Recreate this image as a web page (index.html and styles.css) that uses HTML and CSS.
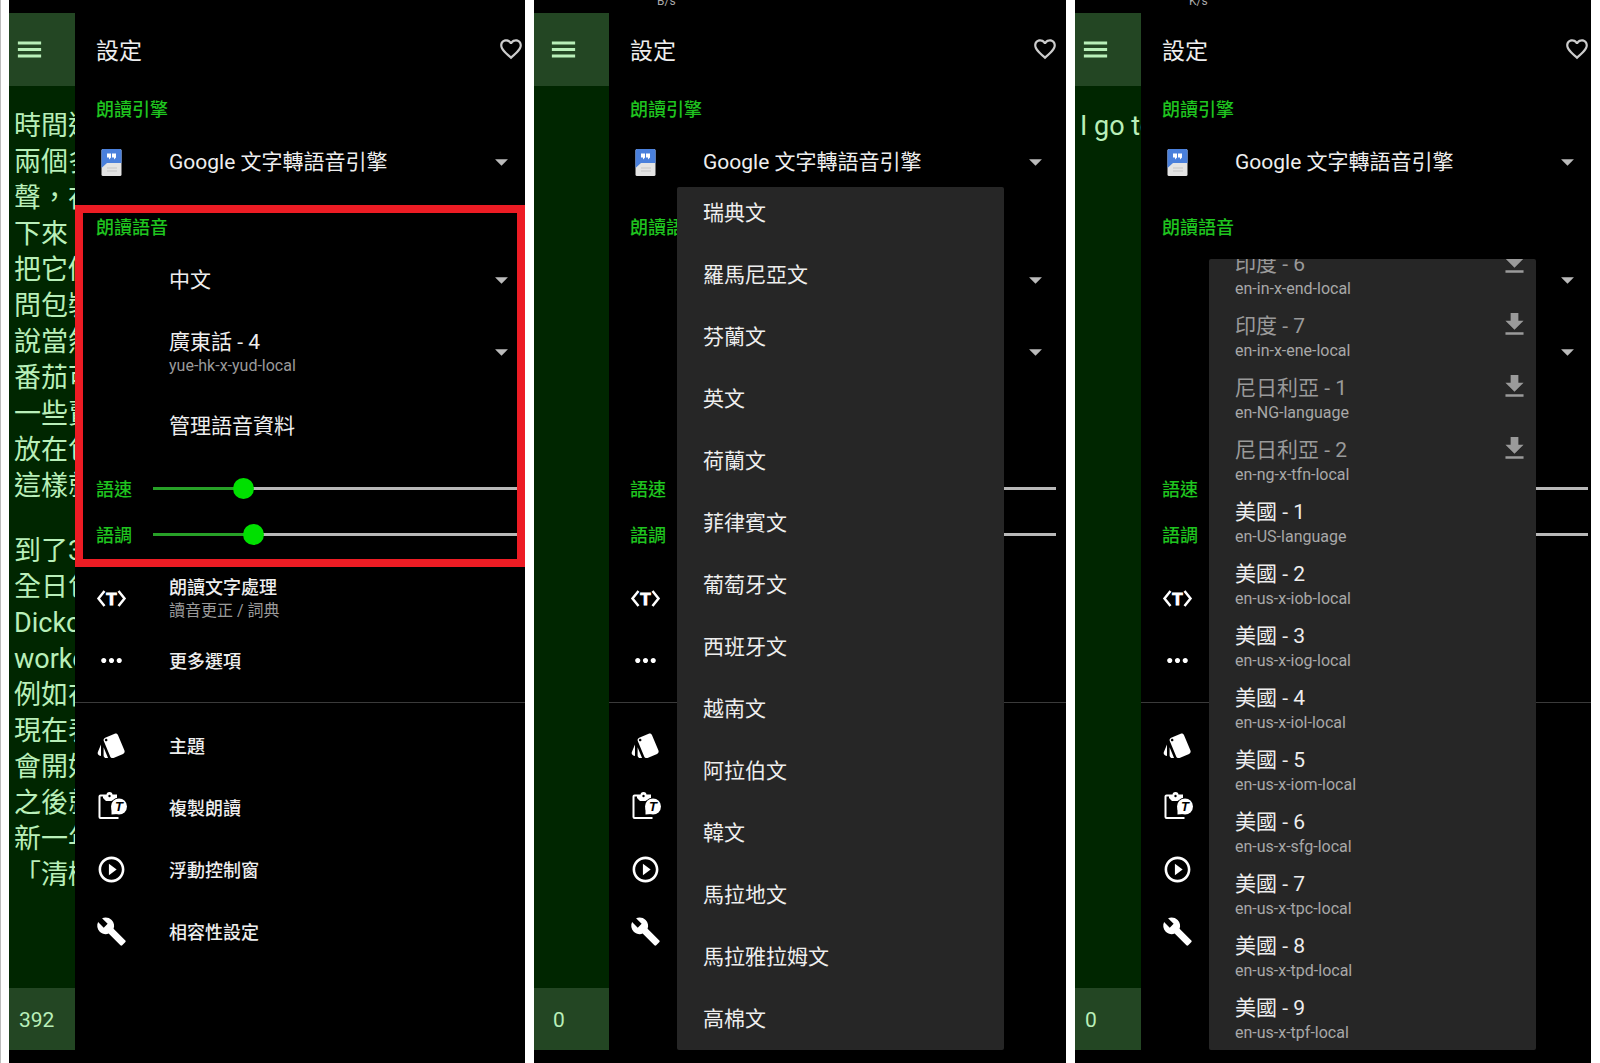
FILE: index.html
```html
<!DOCTYPE html>
<html lang="zh-Hant">
<head>
    <meta charset="UTF-8">
    <meta name="viewport" content="width=device-width, initial-scale=1.0">
    <title>設定</title>
    <link rel="stylesheet" href="styles.css">
</head>
<body>
    <!-- Icons shared by the three screens -->
    <svg class="sprite" aria-hidden="true">
        <symbol id="i-menu" viewBox="0 0 24 24"><path d="M3 18.200h18v-2.400H3v2.400zm0-5h18v-2.400H3v2.400zm0-7.400v2.400h18V5.800H3z"/></symbol>
        <symbol id="i-heart" viewBox="0 0 24 24"><path d="M16.5 3c-1.74 0-3.41.81-4.5 2.09C10.91 3.81 9.24 3 7.5 3 4.42 3 2 5.42 2 8.5c0 3.78 3.4 6.86 8.55 11.54L12 21.35l1.45-1.32C18.6 15.36 22 12.28 22 8.5 22 5.42 19.58 3 16.5 3zm-4.4 15.55l-.1.1-.1-.1C7.14 14.24 4 11.39 4 8.5 4 6.5 5.5 5 7.5 5c1.54 0 3.04.99 3.57 2.36h1.87C13.46 5.99 14.96 5 16.5 5c2 0 3.5 1.5 3.5 3.5 0 2.89-3.14 5.74-7.9 10.05z"/></symbol>
        <symbol id="i-arrow" viewBox="0 0 24 24"><path d="M7 9.5l5 5 5-5z"/></symbol>
        <symbol id="i-download" viewBox="0 0 24 24"><path d="M19 9h-4V3H9v6H5l7 7 7-7zM5 18v2h14v-2H5z"/></symbol>
        <symbol id="i-engine" viewBox="0 0 31 31">
            <rect x="5.500" y="2" width="20" height="27" rx="1.500" fill="#e4e4e4"/>
            <path d="M7 2h17a1.500 1.500 0 0 1 1.500 1.500V16H11l-5.500 5V3.500A1.500 1.500 0 0 1 7 2z" fill="#4a80dc"/>
            <path d="M11 6.500h4v4l-2 2v-2h-2zM16 6.500h4v4l-2 2v-2h-2z" fill="#fff"/>
            <path d="M11 21h10M11 24h10" stroke="#cfcfcf" stroke-width="1.500"/>
        </symbol>
        <symbol id="i-text" viewBox="0 0 31 31">
            <path d="M8.500 8l-6 7.500 6 7.500M22.500 8l6 7.500-6 7.500" fill="none" stroke="#fff" stroke-width="2.500"/>
            <text x="15.500" y="22" text-anchor="middle" class="glyph">T</text>
        </symbol>
        <symbol id="i-more" viewBox="0 0 24 24"><path d="M6 10c-1.100 0-2 .9-2 2s.9 2 2 2 2-.9 2-2-.9-2-2-2zm12 0c-1.100 0-2 .9-2 2s.9 2 2 2 2-.9 2-2-.9-2-2-2zm-6 0c-1.100 0-2 .9-2 2s.9 2 2 2 2-.9 2-2-.9-2-2-2z"/></symbol>
        <symbol id="i-style" viewBox="0 0 24 24"><path d="M2.530 19.650l1.340.56v-9.030l-2.430 5.860c-.41 1.020.08 2.190 1.090 2.610zm19.500-3.700L17.070 3.980c-.31-.75-1.040-1.210-1.810-1.230-.26 0-.53.04-.79.15L7.100 5.950c-.75.31-1.210 1.030-1.230 1.800-.01.27.04.54.15.8l4.960 11.970c.31.76 1.050 1.220 1.830 1.230.26 0 .52-.05.77-.15l7.360-3.050c1.020-.42 1.510-1.590 1.090-2.600zM7.880 8.750c-.55 0-1-.45-1-1s.45-1 1-1 1 .45 1 1-.45 1-1 1zm-2 11c0 1.100.9 2 2 2h1.450l-3.450-8.340v6.340z"/></symbol>
        <symbol id="i-clip" viewBox="0 0 31 31">
            <path d="M22.500 26H4.500a1 1 0 0 1-1-1V4.500a1 1 0 0 1 1-1H21" fill="none" stroke="#fff" stroke-width="2"/>
            <path d="M7 3h3.500a3 3 0 0 1 6 0H21v3l-3 3h-8L7 6z"/>
            <circle cx="13.500" cy="4" r="1.200" fill="#000"/>
            <circle cx="23" cy="14.500" r="9" fill="#000"/>
            <circle cx="23" cy="14.500" r="8"/>
            <path d="M15.500 15v7.500l6-.500z"/>
            <text x="23" y="19" text-anchor="middle" class="glyph-dark">T</text>
        </symbol>
        <symbol id="i-play" viewBox="0 0 24 24"><path d="M10 16.500l6-4.500-6-4.500v9zM12 2C6.480 2 2 6.480 2 12s4.480 10 10 10 10-4.480 10-10S17.520 2 12 2zm0 18c-4.410 0-8-3.590-8-8s3.590-8 8-8 8 3.590 8 8-3.590 8-8 8z"/></symbol>
        <symbol id="i-build" viewBox="0 0 24 24"><path d="M22.700 19l-9.100-9.100c.9-2.300.4-5-1.500-6.900-2-2-5-2.400-7.400-1.300L9 6 6 9 1.600 4.700C.4 7.100.9 10.100 2.900 12.100c1.900 1.900 4.600 2.400 6.900 1.500l9.100 9.100c.4.4 1 .4 1.400 0l2.300-2.300c.5-.4.5-1.100.1-1.400z"/></symbol>
    </svg>

    <main class="screens">
        <section class="phone">
            <div class="status"></div>
            <div class="app">
                <div class="reader">
                    <header class="reader-bar">
                        <button class="icon-btn" aria-label="選單"><svg class="icon"><use href="#i-menu"/></svg></button>
                    </header>
                    <div class="reader-text">
                        <p>時間過<br>兩個多<br>聲，在<br>下來<br>把它們<br>問包裝<br>說當然<br>番茄可<br>一些賣<br>放在包<br>這樣就</p>
                        <p>到了3<br>全日包<br>Dicko<br>worke<br>例如在<br>現在表<br>會開始<br>之後就<br>新一年<br>「清機</p>
                    </div>
                    <footer class="reader-count">392</footer>
                </div>
                <aside class="drawer">
                    <header class="drawer-bar">
                        <h1>設定</h1>
                        <button class="icon-btn" aria-label="最愛"><svg class="icon heart"><use href="#i-heart"/></svg></button>
                    </header>
                    <h2><label for="engine1">朗讀引擎</label></h2>
                    <div class="row">
                        <svg class="icon"><use href="#i-engine"/></svg>
                        <select id="engine1"><option>Google 文字轉語音引擎</option></select>
                        <svg class="icon arrow"><use href="#i-arrow"/></svg>
                    </div>
                    <div class="voice marked">
                        <h2><label for="lang1">朗讀語音</label></h2>
                        <div class="row">
                            <span class="icon"></span>
                            <select id="lang1"><option>中文</option></select>
                            <svg class="icon arrow"><use href="#i-arrow"/></svg>
                        </div>
                        <div class="row tall">
                            <span class="icon"></span>
                            <div class="lines">
                                <select aria-label="語音"><option>廣東話 - 4</option></select>
                                <small>yue-hk-x-yud-local</small>
                            </div>
                            <svg class="icon arrow"><use href="#i-arrow"/></svg>
                        </div>
                        <button class="row"><span class="icon"></span><span class="big">管理語音資料</span></button>
                        <div class="sliders">
                            <div class="slider"><label for="speed1">語速</label><input type="range" id="speed1" value="23" style="--fill: 23%"></div>
                            <div class="slider"><label for="pitch1">語調</label><input type="range" id="pitch1" value="26" style="--fill: 26%"></div>
                        </div>
                    </div>
                    <button class="row"><svg class="icon"><use href="#i-text"/></svg><span class="lines">朗讀文字處理<small>讀音更正 / 詞典</small></span></button>
                    <button class="row"><svg class="icon"><use href="#i-more"/></svg><span>更多選項</span></button>
                    <hr>
                    <button class="row"><svg class="icon"><use href="#i-style"/></svg><span>主題</span></button>
                    <button class="row"><svg class="icon"><use href="#i-clip"/></svg><span>複製朗讀</span></button>
                    <button class="row"><svg class="icon"><use href="#i-play"/></svg><span>浮動控制窗</span></button>
                    <button class="row"><svg class="icon"><use href="#i-build"/></svg><span>相容性設定</span></button>
                </aside>
            </div>
            <div class="nav"></div>
        </section>

        <section class="phone wide">
            <div class="status">B/s</div>
            <div class="app">
                <div class="reader">
                    <header class="reader-bar">
                        <button class="icon-btn" aria-label="選單"><svg class="icon"><use href="#i-menu"/></svg></button>
                    </header>
                    <div class="reader-text"></div>
                    <footer class="reader-count">0</footer>
                </div>
                <aside class="drawer">
                    <header class="drawer-bar">
                        <h1>設定</h1>
                        <button class="icon-btn" aria-label="最愛"><svg class="icon heart"><use href="#i-heart"/></svg></button>
                    </header>
                    <h2><label for="engine2">朗讀引擎</label></h2>
                    <div class="row">
                        <svg class="icon"><use href="#i-engine"/></svg>
                        <select id="engine2"><option>Google 文字轉語音引擎</option></select>
                        <svg class="icon arrow"><use href="#i-arrow"/></svg>
                    </div>
                    <div class="voice">
                        <h2>朗讀語音</h2>
                        <div class="row"><svg class="icon arrow"><use href="#i-arrow"/></svg></div>
                        <div class="row tall"><svg class="icon arrow"><use href="#i-arrow"/></svg></div>
                        <div class="row"></div>
                        <div class="sliders">
                            <div class="slider"><label for="speed2">語速</label><input type="range" id="speed2" value="23" style="--fill: 23%"></div>
                            <div class="slider"><label for="pitch2">語調</label><input type="range" id="pitch2" value="26" style="--fill: 26%"></div>
                        </div>
                    </div>
                    <button class="row" aria-label="朗讀文字處理"><svg class="icon"><use href="#i-text"/></svg></button>
                    <button class="row" aria-label="更多選項"><svg class="icon"><use href="#i-more"/></svg></button>
                    <hr>
                    <button class="row" aria-label="主題"><svg class="icon"><use href="#i-style"/></svg></button>
                    <button class="row" aria-label="複製朗讀"><svg class="icon"><use href="#i-clip"/></svg></button>
                    <button class="row" aria-label="浮動控制窗"><svg class="icon"><use href="#i-play"/></svg></button>
                    <button class="row" aria-label="相容性設定"><svg class="icon"><use href="#i-build"/></svg></button>

                    <div class="popup languages">
                        <button class="item">瑞典文</button>
                        <button class="item">羅馬尼亞文</button>
                        <button class="item">芬蘭文</button>
                        <button class="item">英文</button>
                        <button class="item">荷蘭文</button>
                        <button class="item">菲律賓文</button>
                        <button class="item">葡萄牙文</button>
                        <button class="item">西班牙文</button>
                        <button class="item">越南文</button>
                        <button class="item">阿拉伯文</button>
                        <button class="item">韓文</button>
                        <button class="item">馬拉地文</button>
                        <button class="item">馬拉雅拉姆文</button>
                        <button class="item">高棉文</button>
                    </div>
                </aside>
            </div>
            <div class="nav"></div>
        </section>

        <section class="phone">
            <div class="status">K/s</div>
            <div class="app">
                <div class="reader">
                    <header class="reader-bar">
                        <button class="icon-btn" aria-label="選單"><svg class="icon"><use href="#i-menu"/></svg></button>
                    </header>
                    <div class="reader-text"><p>I go to</p></div>
                    <footer class="reader-count">0</footer>
                </div>
                <aside class="drawer">
                    <header class="drawer-bar">
                        <h1>設定</h1>
                        <button class="icon-btn" aria-label="最愛"><svg class="icon heart"><use href="#i-heart"/></svg></button>
                    </header>
                    <h2><label for="engine3">朗讀引擎</label></h2>
                    <div class="row">
                        <svg class="icon"><use href="#i-engine"/></svg>
                        <select id="engine3"><option>Google 文字轉語音引擎</option></select>
                        <svg class="icon arrow"><use href="#i-arrow"/></svg>
                    </div>
                    <div class="voice">
                        <h2>朗讀語音</h2>
                        <div class="row"><svg class="icon arrow"><use href="#i-arrow"/></svg></div>
                        <div class="row tall"><svg class="icon arrow"><use href="#i-arrow"/></svg></div>
                        <div class="row"></div>
                        <div class="sliders">
                            <div class="slider"><label for="speed3">語速</label><input type="range" id="speed3" value="23" style="--fill: 23%"></div>
                            <div class="slider"><label for="pitch3">語調</label><input type="range" id="pitch3" value="26" style="--fill: 26%"></div>
                        </div>
                    </div>
                    <button class="row" aria-label="朗讀文字處理"><svg class="icon"><use href="#i-text"/></svg></button>
                    <button class="row" aria-label="更多選項"><svg class="icon"><use href="#i-more"/></svg></button>
                    <hr>
                    <button class="row" aria-label="主題"><svg class="icon"><use href="#i-style"/></svg></button>
                    <button class="row" aria-label="複製朗讀"><svg class="icon"><use href="#i-clip"/></svg></button>
                    <button class="row" aria-label="浮動控制窗"><svg class="icon"><use href="#i-play"/></svg></button>
                    <button class="row" aria-label="相容性設定"><svg class="icon"><use href="#i-build"/></svg></button>

                    <div class="popup voices">
                        <button class="item missing"><span>印度 - 6<small>en-in-x-end-local</small></span><svg class="icon"><use href="#i-download"/></svg></button>
                        <button class="item missing"><span>印度 - 7<small>en-in-x-ene-local</small></span><svg class="icon"><use href="#i-download"/></svg></button>
                        <button class="item missing"><span>尼日利亞 - 1<small>en-NG-language</small></span><svg class="icon"><use href="#i-download"/></svg></button>
                        <button class="item missing"><span>尼日利亞 - 2<small>en-ng-x-tfn-local</small></span><svg class="icon"><use href="#i-download"/></svg></button>
                        <button class="item"><span>美國 - 1<small>en-US-language</small></span></button>
                        <button class="item"><span>美國 - 2<small>en-us-x-iob-local</small></span></button>
                        <button class="item"><span>美國 - 3<small>en-us-x-iog-local</small></span></button>
                        <button class="item"><span>美國 - 4<small>en-us-x-iol-local</small></span></button>
                        <button class="item"><span>美國 - 5<small>en-us-x-iom-local</small></span></button>
                        <button class="item"><span>美國 - 6<small>en-us-x-sfg-local</small></span></button>
                        <button class="item"><span>美國 - 7<small>en-us-x-tpc-local</small></span></button>
                        <button class="item"><span>美國 - 8<small>en-us-x-tpd-local</small></span></button>
                        <button class="item"><span>美國 - 9<small>en-us-x-tpf-local</small></span></button>
                    </div>
                </aside>
            </div>
            <div class="nav"></div>
        </section>
    </main>
</body>
</html>
```
FILE: styles.css
```css
* {
    box-sizing: border-box;
}

body {
    margin: 0;
    background-color: #fff;
    color: #eee;
    font-family: Roboto, "Noto Sans CJK TC", sans-serif;
    font-size: 18px;
}

h1, h2, p {
    margin: 0;
    font-weight: 400;
}

button, select {
    margin: 0;
    padding: 0;
    border: 0;
    background: none;
    color: inherit;
    font: inherit;
    text-align: left;
}

select {
    appearance: none;
    flex: 1;
    min-width: 0;
    font-size: 21px;
    line-height: 24px;
}

small {
    display: block;
    color: #9a9a9a;
    font-size: 16px;
    font-weight: 400;
    line-height: 24px;
}

.sprite {
    display: none;
}

.icon {
    display: block;
    flex: none;
    width: 31px;
    height: 31px;
    fill: currentColor;
}

.row .icon {
    color: #fff;
}

.heart {
    width: 26px;
    height: 26px;
    color: #ccc;
}

.row .arrow {
    margin-left: auto;
    color: #bbb;
}

.glyph {
    fill: #fff;
    stroke: #fff;
    stroke-width: 1px;
    font: bold 17px "Liberation Sans", sans-serif;
}

.glyph-dark {
    fill: #000;
    font: italic bold 13px "Liberation Sans", sans-serif;
}

/* Three screens side by side */
.screens {
    display: grid;
    grid-template-columns: 516fr 532fr 516fr;
    gap: 9px;
    height: 100vh;
    min-height: 1063px;
    padding: 0 9px 0 8px;
    border-left: 1px solid #bbb;
}

.phone {
    --inset: 0px;
    --edge: 0px;
    display: flex;
    flex-direction: column;
    min-width: 0;
    background-color: #000;
}

.wide {
    --inset: 9px;
    --edge: 7px;
}

.status {
    display: flex;
    align-items: flex-end;
    height: 13px;
    padding: 0 0 6px calc(114px + var(--inset));
    overflow: hidden;
    color: #aaa;
    font-size: 12px;
    line-height: 12px;
}

.nav {
    height: 13px;
}

.app {
    display: flex;
    flex: 1;
    min-height: 0;
}

/* Reader page behind the drawer */
.reader {
    display: flex;
    flex-direction: column;
    flex: none;
    width: calc(66px + var(--inset));
    overflow: hidden;
    background-color: #002600;
    color: #b9efb9;
}

.reader-bar {
    display: flex;
    align-items: center;
    height: 73px;
    padding-left: calc(5px + var(--inset));
    background-color: #234623;
}

.reader-text {
    flex: 1;
    padding: 22px 0 0 5px;
    font-size: 27px;
    line-height: 36px;
    white-space: nowrap;
}

.reader-text p + p {
    margin-top: 29px;
}

.reader-count {
    height: 62px;
    padding-left: calc(10px + var(--inset));
    background-color: #234623;
    font-size: 21px;
    line-height: 64px;
}

/* Settings drawer */
.drawer {
    position: relative;
    flex: 1;
    min-width: 0;
    background-color: #000;
}

.drawer-bar {
    display: flex;
    align-items: center;
    justify-content: space-between;
    height: 73px;
    padding: 0 calc(1px + var(--edge)) 2px 21px;
}

.drawer-bar h1 {
    font-size: 23px;
}

.drawer h2,
.slider label {
    color: #1fc41f;
    font-size: 18px;
    font-weight: 500;
}

.drawer h2 {
    height: 45px;
    padding-left: 21px;
    line-height: 47px;
}

.row {
    display: flex;
    align-items: center;
    gap: 42px;
    width: 100%;
    height: 62px;
    padding: 0 calc(8px + var(--edge)) 0 21px;
    font-weight: 500;
}

.row select,
.big {
    font-size: 21px;
    font-weight: 400;
}

.tall {
    height: 82px;
}

.lines {
    display: flex;
    flex-direction: column;
    flex: 1;
    padding-top: 4px;
    line-height: 22px;
}

.voice {
    position: relative;
    padding: 11px 0 10px;
}

/* Highlight frame drawn over the voice settings */
.marked::after {
    content: "";
    position: absolute;
    inset: 12px 0 0;
    border: 8px solid #ed1c24;
    pointer-events: none;
}

.sliders {
    padding-top: 10px;
}

.slider {
    display: flex;
    align-items: center;
    gap: 21px;
    height: 46px;
    padding: 0 calc(3px + var(--edge)) 0 21px;
}

.slider label {
    flex: none;
    width: 36px;
}

input[type="range"] {
    appearance: none;
    flex: 1;
    min-width: 0;
    height: 3px;
    margin: 0;
    background: linear-gradient(to right, #27a027 var(--fill), #b8b8b8 var(--fill));
}

input[type="range"]::-webkit-slider-thumb {
    appearance: none;
    width: 21px;
    height: 21px;
    border-radius: 50%;
    background-color: #00e000;
}

hr {
    height: 1px;
    margin: 11px 0;
    border: 0;
    background-color: #3a3a3a;
}

/* Open drop-down lists, scrolled to the end */
.popup {
    position: absolute;
    left: 68px;
    bottom: 0;
    display: flex;
    flex-direction: column;
    justify-content: flex-end;
    width: 327px;
    overflow: hidden;
    border-radius: 2px;
    background-color: #262626;
}

.languages {
    top: 174px;
}

.voices {
    top: 246px;
}

.item {
    display: flex;
    flex: none;
    align-items: center;
    justify-content: space-between;
    height: 62px;
    padding: 0 6px 0 26px;
    font-size: 21px;
    line-height: 24px;
}

.voices .item {
    align-items: flex-start;
    padding-top: 8px;
}

.voices .item .icon {
    margin-top: -5px;
}

.item small {
    color: #a8a8a8;
    line-height: 26px;
}

.missing {
    color: #9a9a9a;
}
```
